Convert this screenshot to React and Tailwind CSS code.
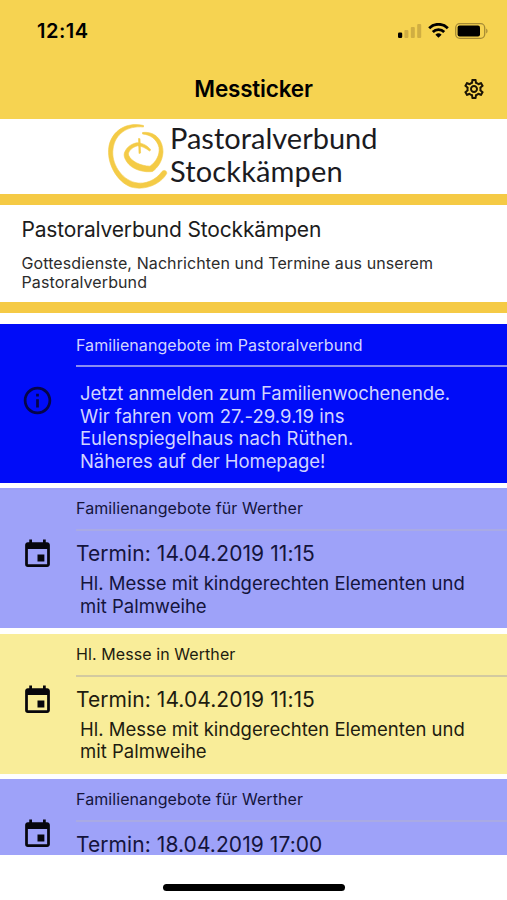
import { MdEvent, MdInfoOutline, MdOutlineSettings } from "react-icons/md";

const entries = [
  {
    id: 1,
    card: "h-[140px] mt-[5px] bg-[#9ea2f9] text-[#14143c]",
    line: "bg-[#a9aae4]",
    title: "Familienangebote für Werther",
    date: "Termin: 14.04.2019 11:15",
    lines: ["Hl. Messe mit kindgerechten Elementen und", "mit Palmweihe"],
  },
  {
    id: 2,
    card: "h-[140px] mt-[5.5px] bg-[#f9ed99] text-[#1e1c10]",
    line: "bg-[#d3caa0]",
    title: "Hl. Messe in Werther",
    date: "Termin: 14.04.2019 11:15",
    lines: ["Hl. Messe mit kindgerechten Elementen und", "mit Palmweihe"],
  },
  {
    id: 3,
    card: "h-[76px] mt-[5.5px] bg-[#9ea2f9] text-[#14143c]",
    line: "bg-[#a9aae4]",
    title: "Familienangebote für Werther",
    date: "Termin: 18.04.2019 17:00",
    lines: [],
  },
];

function StatusBar() {
  return (
    <div className="flex h-[60px] items-center justify-between pt-[2px] pl-[37px] pr-[19px]">
      <span className="text-[20px] leading-6 font-semibold tracking-[0.5px]">12:14</span>
      <div className="flex items-center">
        <svg width="24" height="16" viewBox="0 0 24 16">
          <rect x="0" y="9.5" width="4.2" height="5.5" rx="1.2" fill="#000" />
          <rect x="6.4" y="7" width="4" height="8" rx="1" fill="#d0ae42" />
          <rect x="12.8" y="4" width="4" height="11" rx="1" fill="#d0ae42" />
          <rect x="19.2" y="1" width="4" height="14" rx="1" fill="#d0ae42" />
        </svg>
        <svg className="ml-[6px]" width="21" height="16" viewBox="0 0 21 16" fill="none" stroke="#000">
          <path d="M1.2 5.2A13 13 0 0 1 19.8 5.2" strokeWidth="2.8" />
          <path d="M4.8 9A8 8 0 0 1 16.2 9" strokeWidth="2.8" />
          <path d="M7.4 11.7A4.6 4.6 0 0 1 13.6 11.7L10.5 14.8Z" fill="#000" stroke="none" />
        </svg>
        <svg className="ml-[6px]" width="33" height="16" viewBox="0 0 33 16">
          <rect x="0.7" y="0.7" width="29" height="14.6" rx="4" fill="none" stroke="#a68b35" strokeWidth="1.3" />
          <rect x="2.6" y="2.6" width="22.4" height="10.8" rx="2" fill="#000" />
          <path d="M31.2 5.5C33 6.2 33 9.8 31.2 10.5Z" fill="#a68b35" />
        </svg>
      </div>
    </div>
  );
}

function Header() {
  return (
    <header className="h-[119px] bg-[#f6d351]">
      <StatusBar />
      <div className="grid h-[58px] grid-cols-[1fr_auto_1fr] items-center pr-[21px]">
        <span />
        <h1 className="pl-[21px] text-[22.5px] font-semibold tracking-[-0.2px]">Messticker</h1>
        <MdOutlineSettings className="justify-self-end text-[#1d1505]" size={24} />
      </div>
    </header>
  );
}

function Logo() {
  return (
    <div className="flex h-[75px] pl-[107px]">
      <svg width="62" height="75" viewBox="0 0 62 75" fill="#f4cb46" stroke="#f4cb46" strokeWidth="0.6">
        <path d="M36.5 6.5C19 2.5 5 12 2 27C-1 44 10 63 24 68C38 72 54 65 59.7 54.5C60 51.5 57 50.5 55 52.5C49 61 38 66 28 63.5C14 60 4 44 6 30C8 15 20 6.5 36.5 8Z" />
        <path d="M35.5 13.5C48 12 56 21 56 33C55.5 42 51 48.5 45.5 52.5C38 53.5 28 51.5 22 45.5C17.5 40.5 16 36 18 32.5C20 28 24 25 30 23.7C36 24 41 27 43.8 31L42.5 32C38 28.5 34 27 30.5 26.8C25 28.5 21 32 21.5 36C24 42.5 34 47 43 47.2C49 43 53 36 52 28.5C50 20 43 15.5 35.5 15Z" />
        <path d="M31.5 19.5L33 19.7L33.6 34L32 34.5Z" />
      </svg>
      <div className="pt-[1.5px] pl-px font-['Lato','Noto_Sans',sans-serif] text-[29px] leading-[33px] text-[#1b1b1f]">
        <div>Pastoralverbund</div>
        <div className="tracking-[0.15px]">Stockkämpen</div>
      </div>
    </div>
  );
}

function InfoCard() {
  return (
    <article className="mt-[11px] flex h-[159px] bg-[#000cf8] text-[#d2d5ff]">
      <div className="w-[76px] pt-[60px] pl-[21px]">
        <MdInfoOutline className="text-[#05054a]" size={33} />
      </div>
      <div className="flex-1">
        <h3 className="h-[41px] text-[16px] leading-[42px] tracking-[0.05px]">Familienangebote im Pastoralverbund</h3>
        <div className="h-[2px] bg-[#8a8df2]" />
        <div className="pt-[15px] pl-1 text-[18.5px] leading-[22.7px] tracking-[-0.08px] whitespace-nowrap">
          <p>Jetzt anmelden zum Familienwochenende.</p>
          <p className="tracking-[0.05px]">Wir fahren vom 27.-29.9.19 ins</p>
          <p className="tracking-[0px]">Eulenspiegelhaus nach Rüthen.</p>
          <p>Näheres auf der Homepage!</p>
        </div>
      </div>
    </article>
  );
}

function EventCard({ entry }) {
  const iconPadding = entry.lines.length ? "pt-[50px]" : "pt-[39px]";

  return (
    <article className={`flex ${entry.card}`}>
      <div className={`w-[76px] pl-[21px] ${iconPadding}`}>
        <MdEvent className="text-[#07060c]" size={33} />
      </div>
      <div className="flex-1 whitespace-nowrap">
        <h3 className="h-[41px] text-[16px] leading-[41px] tracking-[0.08px]">{entry.title}</h3>
        <div className={`h-[2px] ${entry.line}`} />
        <p className="pt-[12px] text-[21px] leading-[21px] tracking-[0.07px]">{entry.date}</p>
        {entry.lines.length > 0 && (
          <div className="pt-[8px] pl-1 text-[18.5px] leading-[22.7px]">
            {entry.lines.map((line) => (
              <p key={line}>{line}</p>
            ))}
          </div>
        )}
      </div>
    </article>
  );
}

export default function App() {
  return (
    <div className="flex h-[900px] w-[507px] flex-col overflow-hidden bg-white font-['Inter','Liberation_Sans',sans-serif] text-black">
      <Header />
      <Logo />

      <section className="h-[119px] border-y-[11px] border-[#f5ca45] pt-[11px] pl-[21.5px] whitespace-nowrap">
        <h2 className="text-[21px] leading-[28px] tracking-[-0.17px] text-[#1c1c1c]">Pastoralverbund Stockkämpen</h2>
        <p className="pt-[10px] text-[16px] leading-[19px] tracking-[0.1px] text-[#2c2c2c]">
          Gottesdienste, Nachrichten und Termine aus unserem
          <br />
          Pastoralverbund
        </p>
      </section>

      <main>
        <InfoCard />
        {entries.map((entry) => (
          <EventCard key={entry.id} entry={entry} />
        ))}
      </main>

      <div className="mt-[28.5px] ml-[163px] h-[7px] w-[182px] rounded-full bg-black" />
    </div>
  );
}
